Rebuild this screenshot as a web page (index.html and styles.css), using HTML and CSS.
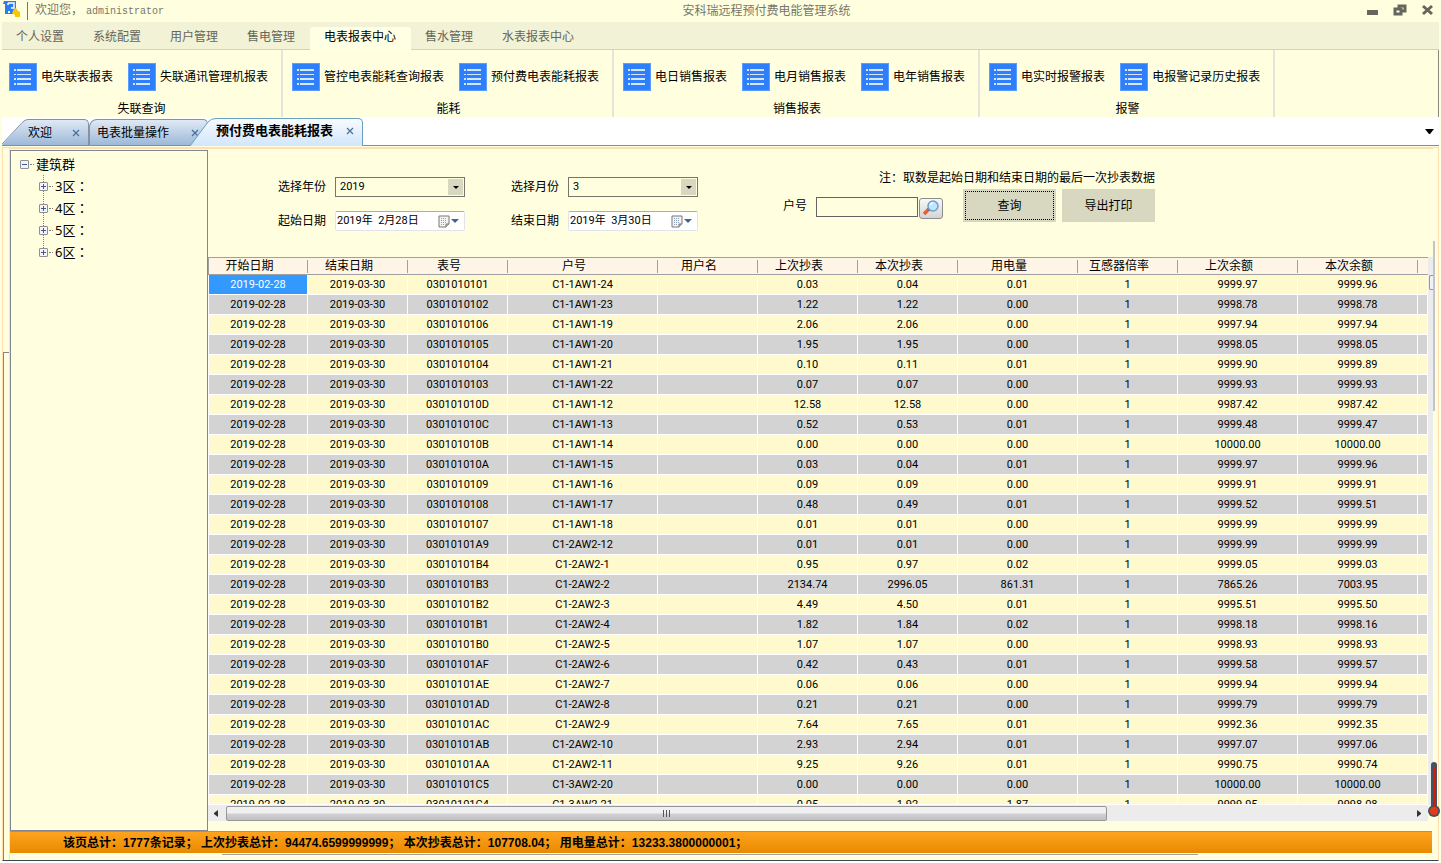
FILE: index.html
```
<!DOCTYPE html>
<html lang="zh-CN">

<head>
    <meta charset="UTF-8">
    <meta name="viewport" content="width=device-width, initial-scale=1.0">
    <title>安科瑞远程预付费电能管理系统</title>
    <link rel="stylesheet" href="styles.css">
</head>

<body>
    <svg class="defs" aria-hidden="true">
        <symbol id="icon-list" viewBox="0 0 28 28">
            <rect width="28" height="28" fill="#5b9cff" />
            <rect x="1" y="1" width="26" height="26" fill="#2e7ffb" />
            <g fill="#d5e6ff">
                <rect x="5" y="6" width="2" height="2" />
                <rect x="8" y="6" width="14" height="2" />
                <rect x="5" y="11" width="2" height="1" />
                <rect x="8" y="11" width="14" height="1" />
                <rect x="5" y="15" width="2" height="2" />
                <rect x="8" y="15" width="14" height="2" />
                <rect x="5" y="20" width="2" height="2" />
                <rect x="8" y="20" width="14" height="2" />
            </g>
        </symbol>
        <symbol id="icon-calendar" viewBox="0 0 12 13">
            <path d="M1 1h10v8l-3 3H1z" fill="#f4f4f4" stroke="#7d7478" />
            <path d="M3 3.5h6M3 5.5h6M3 7.5h6M3 9.5h4" stroke="#8fa0bd" stroke-dasharray="1 1" />
            <path d="M8 12V9h3" fill="#c9c3c6" stroke="#7d7478" />
        </symbol>
        <symbol id="icon-close" viewBox="0 0 8 8">
            <path d="M1 1l6 6M7 1l-6 6" stroke="#4a6e9c" stroke-width="1.2" />
        </symbol>
    </svg>

    <header class="title-bar">
        <svg class="logo" viewBox="0 0 18 18" aria-hidden="true">
            <path d="M1 1h12v10h-3v3H2V4H0z" fill="#2b7cf5" />
            <path d="M5 3h6v5H8M5 3v2" fill="none" stroke="#fff" stroke-width="1.5" />
            <path d="M5 11h2v2H5z" fill="#fff" />
            <path d="M11 9l2-1 2 3 2 1v5h-5v-2l-3-2z" fill="#fbc800" />
        </svg>
        <span class="welcome">欢迎您，<span class="user">administrator</span></span>
        <h1>安科瑞远程预付费电能管理系统</h1>
        <div class="window-buttons">
            <button aria-label="最小化"><svg width="11" height="12"><path d="M0 6h11v5H0z" fill="#66665a" /></svg></button>
            <button aria-label="还原"><svg width="14" height="12"><path d="M6 2h6v5H6z" fill="none" stroke="#66665a" stroke-width="3" /><path d="M2 5h6v5H2z" fill="#fff" stroke="#66665a" stroke-width="3" /></svg></button>
            <button aria-label="关闭"><svg width="11" height="12"><path d="M1 2l9 8M10 2l-9 8" stroke="#66665a" stroke-width="3" /></svg></button>
        </div>
    </header>

    <nav class="menu">
        <a href="#">个人设置</a>
        <a href="#">系统配置</a>
        <a href="#">用户管理</a>
        <a href="#">售电管理</a>
        <a href="#" class="active">电表报表中心</a>
        <a href="#">售水管理</a>
        <a href="#">水表报表中心</a>
    </nav>

    <div class="ribbon">
        <section class="group">
            <div class="group-items">
                <button><svg><use href="#icon-list" /></svg>电失联表报表</button>
                <button><svg><use href="#icon-list" /></svg>失联通讯管理机报表</button>
            </div>
            <h2>失联查询</h2>
        </section>
        <section class="group">
            <div class="group-items">
                <button><svg><use href="#icon-list" /></svg>管控电表能耗查询报表</button>
                <button><svg><use href="#icon-list" /></svg>预付费电表能耗报表</button>
            </div>
            <h2>能耗</h2>
        </section>
        <section class="group">
            <div class="group-items">
                <button><svg><use href="#icon-list" /></svg>电日销售报表</button>
                <button><svg><use href="#icon-list" /></svg>电月销售报表</button>
                <button><svg><use href="#icon-list" /></svg>电年销售报表</button>
            </div>
            <h2>销售报表</h2>
        </section>
        <section class="group">
            <div class="group-items">
                <button><svg><use href="#icon-list" /></svg>电实时报警报表</button>
                <button><svg><use href="#icon-list" /></svg>电报警记录历史报表</button>
            </div>
            <h2>报警</h2>
        </section>
    </div>

    <div class="doc-tabs">
        <div class="doc-tab first">
            <svg class="slope" viewBox="0 0 26 28" preserveAspectRatio="none"><defs><linearGradient id="tab-blue" x2="0" y2="1"><stop offset="0" stop-color="#dfe9f4" /><stop offset="1" stop-color="#9db9d8" /></linearGradient></defs><path d="M0 28L20 4Q23 0 26 0V28z" fill="url(#tab-blue)" /><path d="M0 27L20 4Q23 .5 26 .5" fill="none" stroke="#8592a3" /></svg>
            <div class="tab-body"><button>欢迎</button><button class="close" aria-label="关闭欢迎"><svg><use href="#icon-close" /></svg></button></div>
        </div>
        <div class="doc-tab second">
            <div class="tab-body"><button>电表批量操作</button><button class="close" aria-label="关闭电表批量操作"><svg><use href="#icon-close" /></svg></button></div>
        </div>
        <div class="doc-tab current">
            <svg class="slope" viewBox="0 0 26 28" preserveAspectRatio="none"><defs><linearGradient id="tab-light" x2="0" y2="1"><stop offset="0" stop-color="#f7fbff" /><stop offset="1" stop-color="#d2e6fb" /></linearGradient></defs><path d="M0 28L18 4Q21 0 26 0V28z" fill="url(#tab-light)" /><path d="M0 28L18 4Q21 .5 26 .5" fill="none" stroke="#6a9fc0" /></svg>
            <div class="tab-body"><button>预付费电表能耗报表</button><button class="close" aria-label="关闭预付费电表能耗报表"><svg><use href="#icon-close" /></svg></button></div>
        </div>
        <button class="tab-list" aria-label="标签列表"><svg width="9" height="5"><path d="M0 0h9L5 5H4z" /></svg></button>
    </div>

    <div class="frame">
        <div class="frame-edge"></div>
        <div class="page">
            <main>
                <aside class="tree" lang="zh-TW">
                    <ul>
                        <li>
                            <div class="node"><button class="expander" aria-label="折叠"></button><span>建筑群</span></div>
                            <ul>
                                <li class="node"><button class="expander plus" aria-label="展开"></button><span>3区：</span></li>
                                <li class="node"><button class="expander plus" aria-label="展开"></button><span>4区：</span></li>
                                <li class="node"><button class="expander plus" aria-label="展开"></button><span>5区：</span></li>
                                <li class="node"><button class="expander plus" aria-label="展开"></button><span>6区：</span></li>
                            </ul>
                        </li>
                    </ul>
                </aside>

                <section class="report">
                    <form class="filters">
                        <div class="fields">
                            <label for="year">选择年份</label>
                            <div class="select-box"><select id="year"><option>2019</option></select></div>
                            <label for="start">起始日期</label>
                            <div class="date-box"><input id="start" type="text" value="2019年  2月28日"><button type="button" aria-label="选择起始日期"><svg width="12" height="13"><use href="#icon-calendar" /></svg><svg width="8" height="4"><path d="M0 0h8L4 4z" fill="#43629a" /></svg></button></div>
                        </div>
                        <div class="fields">
                            <label for="month">选择月份</label>
                            <div class="select-box"><select id="month"><option>3</option></select></div>
                            <label for="end">结束日期</label>
                            <div class="date-box"><input id="end" type="text" value="2019年  3月30日"><button type="button" aria-label="选择结束日期"><svg width="12" height="13"><use href="#icon-calendar" /></svg><svg width="8" height="4"><path d="M0 0h8L4 4z" fill="#43629a" /></svg></button></div>
                        </div>
                        <div class="search">
                            <p>注：取数是起始日期和结束日期的最后一次抄表数据</p>
                            <div class="search-row">
                                <label for="room">户号</label>
                                <input id="room" type="text">
                                <button type="button" class="lookup" aria-label="查找户号">
                                    <svg width="18" height="16" viewBox="0 0 18 16">
                                        <path d="M7 9l-5 5" stroke="#e8602c" stroke-width="3.5" />
                                        <path d="M8 8l-2 2" stroke="#7a6a80" stroke-width="3" />
                                        <circle cx="11" cy="6" r="5" fill="#bfe6fb" stroke="#6d9fd0" stroke-width="1.5" />
                                        <path d="M8 5q1-2 3-2" fill="none" stroke="#fff" stroke-width="1.5" />
                                    </svg>
                                </button>
                                <button type="button" class="action query">查询</button>
                                <button type="button" class="action">导出打印</button>
                            </div>
                        </div>
                    </form>

                    <div class="grid-area">
                        <div class="grid-view">
                            <table>
                                <colgroup>
                                    <col class="w100"><col class="w100"><col class="w100"><col class="w150"><col class="w100"><col class="w100">
                                    <col class="w100"><col class="w120"><col class="w100"><col class="w120"><col class="w120"><col>
                                </colgroup>
                                <thead>
                                    <tr>
                                        <th>开始日期</th>
                                        <th>结束日期</th>
                                        <th>表号</th>
                                        <th>户号</th>
                                        <th>用户名</th>
                                        <th>上次抄表</th>
                                        <th>本次抄表</th>
                                        <th>用电量</th>
                                        <th>互感器倍率</th>
                                        <th>上次余额</th>
                                        <th>本次余额</th>
                                        <th></th>
                                    </tr>
                                </thead>
                                <tbody id="rows"></tbody>
                            </table>
                        </div>
                        <div class="v-scroll"><div class="v-thumb"></div></div>
                        <div class="h-scroll">
                            <svg width="4" height="7"><path d="M4 0v7L0 4V3z" fill="#333" /></svg>
                            <div class="h-thumb"><i></i><i></i><i></i></div>
                            <svg width="4" height="7"><path d="M0 0v7l4-3V3z" fill="#333" /></svg>
                        </div>
                    </div>
                </section>
            </main>
            <footer class="totals">该页总计：1777条记录； 上次抄表总计：94474.6599999999； 本次抄表总计：107708.04； 用电量总计：13233.3800000001；</footer>
            <div class="outer-scroll"></div>
        </div>
        <div class="side-scroll"></div>
    </div>
    <svg class="gauge" viewBox="0 0 12 56" aria-hidden="true">
        <rect x="3" y="0" width="6" height="50" rx="3" fill="#43545e" />
        <circle cx="6" cy="49" r="6" fill="#43545e" />
        <rect x="5" y="6" width="2" height="42" fill="#d11a10" />
        <circle cx="6" cy="49" r="4" fill="#e5391c" />
    </svg>

    <script>
        // meter no, room no, last reading, this reading, usage, last balance, this balance
        const records = [
            ['0301010101', 'C1-1AW1-24', '0.03', '0.04', '0.01', '9999.97', '9999.96'],
            ['0301010102', 'C1-1AW1-23', '1.22', '1.22', '0.00', '9998.78', '9998.78'],
            ['0301010106', 'C1-1AW1-19', '2.06', '2.06', '0.00', '9997.94', '9997.94'],
            ['0301010105', 'C1-1AW1-20', '1.95', '1.95', '0.00', '9998.05', '9998.05'],
            ['0301010104', 'C1-1AW1-21', '0.10', '0.11', '0.01', '9999.90', '9999.89'],
            ['0301010103', 'C1-1AW1-22', '0.07', '0.07', '0.00', '9999.93', '9999.93'],
            ['030101010D', 'C1-1AW1-12', '12.58', '12.58', '0.00', '9987.42', '9987.42'],
            ['030101010C', 'C1-1AW1-13', '0.52', '0.53', '0.01', '9999.48', '9999.47'],
            ['030101010B', 'C1-1AW1-14', '0.00', '0.00', '0.00', '10000.00', '10000.00'],
            ['030101010A', 'C1-1AW1-15', '0.03', '0.04', '0.01', '9999.97', '9999.96'],
            ['0301010109', 'C1-1AW1-16', '0.09', '0.09', '0.00', '9999.91', '9999.91'],
            ['0301010108', 'C1-1AW1-17', '0.48', '0.49', '0.01', '9999.52', '9999.51'],
            ['0301010107', 'C1-1AW1-18', '0.01', '0.01', '0.00', '9999.99', '9999.99'],
            ['03010101A9', 'C1-2AW2-12', '0.01', '0.01', '0.00', '9999.99', '9999.99'],
            ['03010101B4', 'C1-2AW2-1', '0.95', '0.97', '0.02', '9999.05', '9999.03'],
            ['03010101B3', 'C1-2AW2-2', '2134.74', '2996.05', '861.31', '7865.26', '7003.95'],
            ['03010101B2', 'C1-2AW2-3', '4.49', '4.50', '0.01', '9995.51', '9995.50'],
            ['03010101B1', 'C1-2AW2-4', '1.82', '1.84', '0.02', '9998.18', '9998.16'],
            ['03010101B0', 'C1-2AW2-5', '1.07', '1.07', '0.00', '9998.93', '9998.93'],
            ['03010101AF', 'C1-2AW2-6', '0.42', '0.43', '0.01', '9999.58', '9999.57'],
            ['03010101AE', 'C1-2AW2-7', '0.06', '0.06', '0.00', '9999.94', '9999.94'],
            ['03010101AD', 'C1-2AW2-8', '0.21', '0.21', '0.00', '9999.79', '9999.79'],
            ['03010101AC', 'C1-2AW2-9', '7.64', '7.65', '0.01', '9992.36', '9992.35'],
            ['03010101AB', 'C1-2AW2-10', '2.93', '2.94', '0.01', '9997.07', '9997.06'],
            ['03010101AA', 'C1-2AW2-11', '9.25', '9.26', '0.01', '9990.75', '9990.74'],
            ['03010101C5', 'C1-3AW2-20', '0.00', '0.00', '0.00', '10000.00', '10000.00'],
            ['03010101C4', 'C1-3AW2-21', '0.05', '1.92', '1.87', '9999.95', '9998.08']
        ];

        document.getElementById('rows').innerHTML = records.map(r => {
            const cells = ['2019-02-28', '2019-03-30', r[0], r[1], '', r[2], r[3], r[4], '1', r[5], r[6], ''];
            return '<tr>' + cells.map(c => `<td>${c}</td>`).join('') + '</tr>';
        }).join('');
    </script>
</body>

</html>
```
FILE: styles.css
```
* {
    box-sizing: border-box;
}

body {
    margin: 0;
    height: 100vh;
    display: flex;
    flex-direction: column;
    overflow: hidden;
    background: #ffffe0;
    border-bottom: 2px solid #fff;
    font: 12px/16px "Liberation Sans", "Noto Sans CJK SC", sans-serif;
    color: #000;
}

button,
input,
select {
    font: inherit;
    color: inherit;
    margin: 0;
    padding: 0;
    border: none;
    background: none;
}

h1,
h2,
p,
ul {
    margin: 0;
    padding: 0;
    font-size: inherit;
    font-weight: normal;
    list-style: none;
}

.defs {
    display: none;
}

/* Title bar */
.title-bar {
    height: 22px;
    display: grid;
    grid-template-columns: 24px 9fr auto 8fr;
    align-items: center;
    padding: 0 8px 0 3px;
    color: #77776a;
}

.logo {
    width: 18px;
    height: 18px;
    align-self: start;
}

.welcome {
    border-left: 1px solid #77776a;
    padding-left: 7px;
}

.user {
    font-family: "Liberation Mono", monospace;
    font-size: 10px;
    margin-left: 3px;
}

.window-buttons {
    display: flex;
    justify-content: flex-end;
    gap: 15px;
    padding-bottom: 2px;
}

.window-buttons svg {
    display: block;
}

/* Main menu */
.menu {
    display: flex;
    height: 28px;
    margin: 0 2px;
    padding-top: 5px;
    background: #f1f2d6;
    border-bottom: 1px solid #d3d3bd;
}

.menu a {
    height: 23px;
    line-height: 20px;
    padding: 0 15px 0 14px;
    color: #66665a;
    text-decoration: none;
}

.menu .active {
    color: #000;
    background: #ffffe4;
    border-radius: 3px 3px 0 0;
}

/* Ribbon */
.ribbon {
    display: flex;
    height: 67px;
    margin: 0 2px;
    border-right: 1px solid #8a8a7c;
}

.group {
    padding: 13px 13px 0 9px;
    border-right: 2px solid #e4e4d8;
}

.group:first-child {
    padding-left: 7px;
}

.group-items {
    display: flex;
    gap: 15px;
}

.group button {
    display: flex;
    align-items: center;
    gap: 4px;
    white-space: nowrap;
}

.group svg {
    width: 28px;
    height: 28px;
}

.group h2 {
    margin-top: 10px;
    padding-left: 6px;
    text-align: center;
}

/* Document tabs */
.doc-tabs {
    display: flex;
    align-items: flex-end;
    height: 29px;
    margin: 0 2px;
    background: #fff;
    border-bottom: 1px solid #6a95b8;
}

.doc-tab {
    display: flex;
    height: 26px;
}

.slope {
    width: 26px;
    height: 100%;
    flex: none;
}

.tab-body {
    display: flex;
    align-items: center;
    justify-content: space-between;
    flex: 1;
    padding-right: 8px;
    border: 0 solid #8592a3;
    border-width: 1px 1px 0 0;
    border-radius: 0 5px 0 0;
    background: linear-gradient(#dfe9f4, #9db9d8);
}

.first {
    width: 87px;
}

.second {
    width: 119px;
}

.second .tab-body {
    padding-left: 7px;
    border-left-width: 1px;
    border-radius: 8px 5px 0 0;
}

.current {
    width: 173px;
    height: 28px;
    margin: 0 0 -1px -18px;
    font-size: 13px;
    font-weight: bold;
}

.current .tab-body {
    padding-bottom: 3px;
    border-color: #6a9fc0;
    background: linear-gradient(#f7fbff, #d2e6fb);
}

.close svg {
    display: block;
    width: 8px;
    height: 8px;
}

.tab-list {
    margin: 0 5px 11px auto;
}

.tab-list svg {
    display: block;
}

/* Window frame */
.frame {
    flex: 1;
    min-height: 0;
    display: flex;
    margin: 1px 2px 0;
    border: 1px solid #ffdfb2;
    border-bottom: 1px solid #3c4650;
}

.frame-edge {
    width: 6px;
    margin-top: 204px;
    border: 1px solid #85858f;
    border-width: 1px 0 0 1px;
}

.page {
    flex: 1;
    min-width: 0;
    display: flex;
    flex-direction: column;
    padding-top: 1px;
    border-top: 1px solid #ffdfb2;
    border-left: 1px solid #ffdfb2;
}

main {
    flex: 1;
    min-height: 0;
    display: flex;
}

.tree {
    width: 198px;
    border: 1px solid #828790;
    padding: 2px 0 0 9px;
    font: 13px/22px "Noto Sans", "Noto Sans CJK TC", sans-serif;
}

.tree ul ul {
    padding-left: 19px;
}

/* dotted guide lines behind the expanders */
.tree ul ul li {
    background: repeating-linear-gradient(#808080 0 1px, transparent 1px 2px) 4px 0 / 1px 100% no-repeat;
}

.tree ul ul li:last-child {
    background-size: 1px 50%;
}

.node {
    display: flex;
    align-items: center;
    height: 22px;
}

.node::before {
    content: "";
    order: 1;
    width: 4px;
    margin: 0 2px 0 1px;
    border-top: 1px dotted #808080;
}

.node span {
    order: 2;
}

.expander {
    width: 9px;
    height: 9px;
    border: 1px solid #8f8f8f;
    border-radius: 1px;
    background: linear-gradient(#3c5a9c, #3c5a9c) center / 5px 1px no-repeat, #f4f4f4;
}

.expander.plus {
    background: linear-gradient(#3c5a9c, #3c5a9c) center / 5px 1px no-repeat, linear-gradient(#3c5a9c, #3c5a9c) center / 1px 5px no-repeat, #f4f4f4;
}

.report {
    flex: 1;
    min-width: 0;
    display: flex;
    flex-direction: column;
}

/* Filters */
.filters {
    display: flex;
    height: 107px;
    padding: 20px 0 0 70px;
}

.fields {
    display: grid;
    grid-template-columns: 48px 130px;
    grid-auto-rows: 20px;
    gap: 14px 9px;
    align-content: start;
    align-items: center;
    margin: 7px 46px 0 0;
}

.fields label,
.search label {
    white-space: nowrap;
}

.select-box {
    position: relative;
    height: 20px;
}

.select-box::after {
    content: "";
    position: absolute;
    top: 2px;
    right: 2px;
    width: 15px;
    height: 16px;
    background: #d8d8c0;
    pointer-events: none;
}

.select-box::before {
    content: "";
    position: absolute;
    z-index: 1;
    top: 9px;
    right: 6px;
    border: 3px solid transparent;
    border-top-color: #000;
    border-bottom: none;
    pointer-events: none;
}

select {
    appearance: none;
    width: 100%;
    height: 20px;
    padding-left: 4px;
    border: 1px solid #75756a;
    border-radius: 0;
    font-family: Roboto, sans-serif;
    font-size: 11px;
}

.date-box {
    display: flex;
    align-items: center;
    height: 20px;
    padding-right: 5px;
    background: #fff;
    border: 1px solid #e2e3ea;
    border-top-color: #abadb3;
    border-radius: 2px;
}

.date-box input {
    flex: 1;
    min-width: 0;
    padding-left: 1px;
    font-family: Roboto, "Noto Sans CJK SC", sans-serif;
    font-size: 11px;
}

.date-box button {
    display: flex;
    align-items: center;
    gap: 1px;
}

.search {
    margin-left: 39px;
}

.search p {
    text-align: right;
}

.search-row {
    display: flex;
    align-items: center;
    margin-top: 3px;
}

.search-row input {
    width: 102px;
    height: 20px;
    margin: 2px 1px 0 9px;
    border: 1px solid #646464;
}

.lookup {
    display: flex;
    align-items: center;
    justify-content: center;
    width: 24px;
    height: 21px;
    margin: 5px 20px 0 0;
    border: 1px solid #8c8c8c;
    border-radius: 3px;
    background: linear-gradient(#f8f8f8, #d4d4d4);
}

.action {
    width: 93px;
    height: 33px;
    background: #d8d8c0;
}

.query {
    margin-right: 6px;
    outline: 1px dotted #000;
    outline-offset: -3px;
}

/* Report grid */
.grid-area {
    flex: 1;
    min-height: 0;
    display: grid;
    grid-template-columns: 1fr 5px;
    grid-template-rows: 1fr 16px;
    padding-bottom: 10px;
}

.grid-view {
    min-height: 0;
    overflow: hidden;
    border-bottom: 1px solid #fff;
}

table {
    width: 100%;
    table-layout: fixed;
    border-collapse: separate;
    border-spacing: 0;
}

.w100 {
    width: 100px;
}

.w120 {
    width: 120px;
}

.w150 {
    width: 150px;
}

th {
    height: 18px;
    padding: 0 18px 0 0;
    border-top: 1px solid #a0a0a0;
    border-bottom: 1px solid #a0a0a0;
    background: linear-gradient(#a0a0a0, #a0a0a0) right center / 1px 13px no-repeat, #fff5e6;
    font-weight: normal;
    line-height: 16px;
    white-space: nowrap;
}

th:first-child {
    border-left: 1px solid #a0a0a0;
}

th:last-child {
    background: #fff5e6;
}

td {
    height: 20px;
    padding: 0;
    border: 0 solid #fff;
    border-width: 0 1px 1px 0;
    background: #fffacd;
    font-family: Roboto, "Liberation Sans", sans-serif;
    font-size: 11px;
    line-height: 19px;
    text-align: center;
}

td:first-child {
    border-left-width: 1px;
}

tr:nth-child(even) td {
    background: #d3d3d3;
}

tr:first-child td:first-child {
    background: #3399ff;
    color: #fff;
}

.v-scroll {
    padding-top: 18px;
    background: #ececec;
}

.v-thumb {
    height: 15px;
    margin-left: 1px;
    border: 1px solid #979797;
    border-right: none;
    border-radius: 2px 0 0 2px;
    background: #f2f2f2;
}

.h-scroll {
    display: flex;
    align-items: center;
    gap: 8px;
    padding: 0 7px 0 6px;
    background: #ececec;
}

.h-thumb {
    display: flex;
    align-items: center;
    justify-content: center;
    gap: 2px;
    width: 73%;
    height: 15px;
    margin-right: auto;
    border: 1px solid #979797;
    border-radius: 2px;
    background: linear-gradient(#f0f0f0 45%, #d0d0d2 55%, #c0c0c4);
}

.h-thumb i {
    width: 1px;
    height: 7px;
    background: #555;
}

/* Totals */
.totals {
    height: 22px;
    margin-right: 1px;
    padding-left: 53px;
    border-top: 1px solid #d98a1c;
    background: linear-gradient(#ffa31e, #e88a00);
    font-weight: bold;
    line-height: 22px;
    white-space: pre;
}

.outer-scroll {
    height: 7px;
    margin: 0 235px 0 212px;
    background: linear-gradient(#a0a0a0, #a0a0a0) 0 1px / 100% 1px no-repeat;
}

.side-scroll {
    width: 5px;
    height: 170px;
    margin-top: 93px;
    background: linear-gradient(#c4c4c8, #c4c4c8) 0 0 / 2px 100% no-repeat;
}

.gauge {
    position: absolute;
    right: 1px;
    bottom: 45px;
    width: 12px;
    height: 56px;
}
```
